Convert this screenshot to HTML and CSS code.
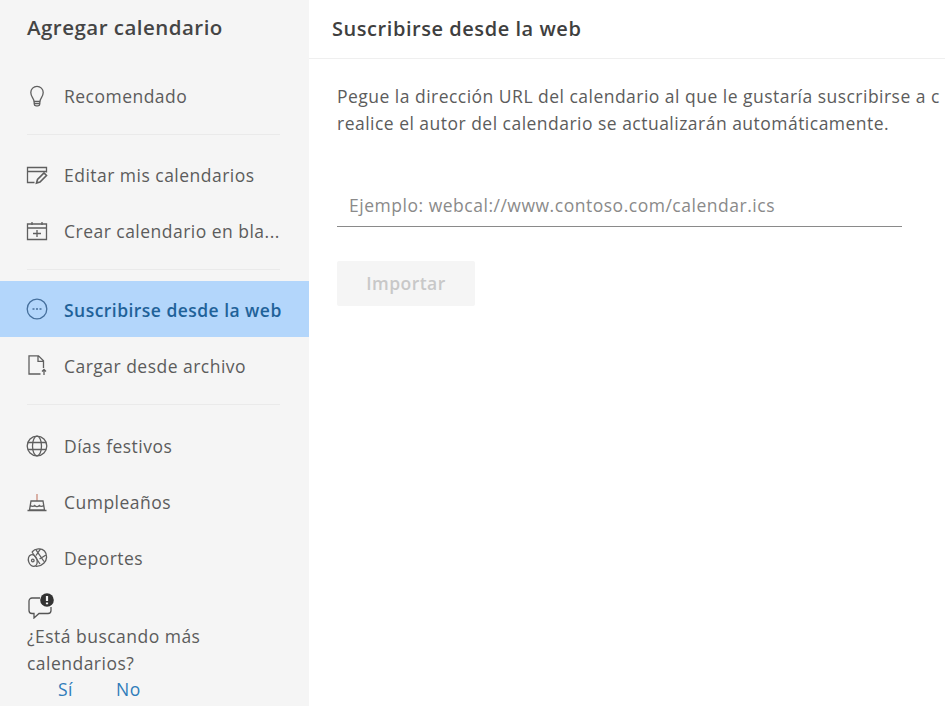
FILE: index.html
```html
<!DOCTYPE html>
<html lang="es">
<head>
<meta charset="utf-8">
<title>Agregar calendario</title>
<link rel="stylesheet" href="styles.css">
</head>
<body>
<div class="app">
  <aside class="sidebar">
    <h1 class="side-title">Agregar calendario</h1>
    <nav class="group first">
      <div class="row">
        <svg class="icon" viewBox="0 0 22 22"><path d="M8 16.500C8 13.500 4.800 12 4.800 7.500a6.200 6.200 0 0 1 12.400 0C17.200 12 14 13.500 14 16.500zM8.200 16.500v2.500c0 1 .8 1.800 1.800 1.800h2c1 0 1.800-.8 1.800-1.800v-2.500M8.200 18.700h5.600"/></svg>
        <span class="label">Recomendado</span>
      </div>
    </nav>
    <nav class="group">
      <div class="row">
        <svg class="icon" viewBox="0 0 22 20"><path d="M8.500 17.500H1.500V2.500h19v5M1.500 6.500h19"/><path class="thick" d="M10.500 18l1-3.500 6.500-6.500 2.500 2.500-6.500 6.500z"/></svg>
        <span class="label">Editar mis calendarios</span>
      </div>
      <div class="row">
        <svg class="icon" viewBox="0 0 22 22"><path d="M1.500 4h19v15.500h-19zM1.500 8h19M6 2v3M16 2v3M11 10v7M7 13.500h8"/></svg>
        <span class="label">Crear calendario en bla...</span>
      </div>
    </nav>
    <nav class="group tight">
      <div class="row active">
        <svg class="icon" viewBox="0 0 22 22"><circle cx="11" cy="11" r="9.800"/><path class="dots" d="M6.500 11h2M10 11h2M13.500 11h2"/></svg>
        <span class="label">Suscribirse desde la web</span>
      </div>
      <div class="row">
        <svg class="icon" viewBox="0 0 20 22"><path d="M13.500 20H2V1.800h9.500l5 5V14M11 2v5.300h5.500M17 15.500v5.500M15 17.500l2-2 2 2"/></svg>
        <span class="label">Cargar desde archivo</span>
      </div>
    </nav>
    <nav class="group last">
      <div class="row">
        <svg class="icon" viewBox="0 0 22 22"><circle cx="11" cy="11" r="9.800"/><ellipse cx="11" cy="11" rx="4.500" ry="9.800"/><path d="M2 7.500h18M2 14.500h18"/></svg>
        <span class="label">Días festivos</span>
      </div>
      <div class="row">
        <svg class="icon" viewBox="0 0 22 22"><path class="candle" d="M11 3v7"/><path d="M5 10h12l1.500 9h-15zM1.500 19.500h19M4.300 14.500c2.200 1.500 3 1.500 4.400 0 1.500 1.500 3 1.500 4.600 0 1.400 1.500 2.200 1.500 4.400 0"/></svg>
        <span class="label">Cumpleaños</span>
      </div>
      <div class="row">
        <svg class="icon" viewBox="0 0 22 22"><path d="M6 5C9 1.200 15.500.8 18.500 4s2.800 9-.7 12.200c-2.800 2.600-6 3.500-8.300 3.200"/><ellipse cx="6.800" cy="13.500" rx="4.300" ry="6" transform="rotate(-18 6.800 13.500)"/><path d="M6 5l8 12M10 2.800l8 11.700M14.500 1.800L10 8.500M20 8l-6.500 4"/><circle cx="6.800" cy="13.500" r="1.300"/></svg>
        <span class="label">Deportes</span>
      </div>
    </nav>
    <section class="feedback">
      <svg class="feedback-icon" viewBox="0 0 28 26"><path class="bubble" d="M13 5H5a3 3 0 0 0-3 3v9.500a3 3 0 0 0 3 3h2v4.500l5-4.500h9a3 3 0 0 0 3-3V14"/><circle class="badge" cx="20" cy="7" r="6.800"/><path class="mark" d="M20 3v5M20 9.500v1.700"/></svg>
      <p class="feedback-text">¿Está buscando más calendarios?</p>
      <div class="answers"><a class="answer">Sí</a><a class="answer">No</a></div>
    </section>
  </aside>
  <main class="content">
    <header class="content-head"><h2 class="content-title">Suscribirse desde la web</h2></header>
    <div class="content-body">
      <p class="intro">Pegue la dirección URL del calendario al que le gustaría suscribirse a c<br>realice el autor del calendario se actualizarán automáticamente.</p>
      <input class="url" type="text" placeholder="Ejemplo: webcal://www.contoso.com/calendar.ics">
      <button class="import" type="button" disabled>Importar</button>
    </div>
  </main>
</div>
</body>
</html>
```
FILE: styles.css
```css
* { box-sizing: border-box; }
html, body { margin: 0; height: 100%; overflow: hidden; background: #fff; }
body { font-family: "Open Sans", "Noto Sans", sans-serif; font-size: 17.5px; letter-spacing: 0.48px; color: #5c5c5c; }
.app { display: flex; width: 945px; height: 706px; }
.sidebar { width: 309px; flex: none; background: #f5f5f5; display: flex; flex-direction: column; }
.side-title { margin: 0; height: 58px; padding-left: 27px; line-height: 55px; font-size: 20.500px; font-weight: 600; letter-spacing: 0.47px; color: #454545; }
.group { margin-bottom: 11px; }
.group.first { padding-top: 10px; margin-bottom: 12px; }
.group::after { content: ""; display: block; height: 1px; margin: 10px 29px 0 27px; background: #eaeaea; }
.group.tight::after { margin-top: 11px; }
.group.tight { margin-bottom: 13px; }
.group.last { margin-bottom: 0; }
.group.last::after { display: none; }
.row { height: 56px; display: flex; align-items: center; padding-left: 26px; gap: 16px; }
.icon { width: 22px; height: 22px; flex: none; fill: none; stroke: #5f5f5f; stroke-width: 1.300; }
.icon .thick { stroke-width: 1.600; }
.icon .candle { stroke: #c98a7a; }
.group.tight .label { padding-top: 2px; }
.label { white-space: nowrap; }
.row.active { background: #b3d6fb; color: #1f6299; font-weight: 600; letter-spacing: 0.46px; }
.row.active .icon { stroke: #456f9c; }
.row.active .icon .dots { stroke-width: 1.600; }
.feedback { padding: 7px 0 0 27px; }
.feedback-icon { display: block; width: 28px; height: 26px; fill: none; stroke: #555; stroke-width: 1.300; }
.bubble { fill: none; }
.badge { fill: #333; stroke: none; }
.mark { stroke: #f5f5f5; stroke-width: 2.200; }
.feedback-text { margin: 4px 0 0; width: 200px; line-height: 27px; }
.answers { display: flex; gap: 43px; padding-left: 31px; line-height: 25px; }
.answer { color: #2f7cba; }
.content { flex: 1; min-width: 0; display: flex; flex-direction: column; }
.content-head { height: 59px; border-bottom: 1px solid #efefef; padding-left: 23px; }
.content-title { margin: 0; line-height: 58px; font-size: 20px; font-weight: 600; letter-spacing: 0.55px; color: #3f3f3f; }
.content-body { padding: 24px 0 0 28px; display: flex; flex-direction: column; align-items: flex-start; }
.intro { margin: 0; line-height: 27px; white-space: nowrap; }
.url { margin-top: 47px; width: 565px; height: 43px; padding: 0 12px; border: 0; border-bottom: 1.500px solid #8a8a8a; outline: 0; background: transparent; font: inherit; letter-spacing: 0.52px; color: #555; }
.url::placeholder { color: #8a8a8a; opacity: 1; }
.import { margin-top: 34px; width: 138px; height: 45px; border: 0; border-radius: 2px; background: #f5f5f5; font: inherit; font-weight: 600; letter-spacing: 0.46px; color: #c8c8c8; padding: 0 0 2px; }
```
